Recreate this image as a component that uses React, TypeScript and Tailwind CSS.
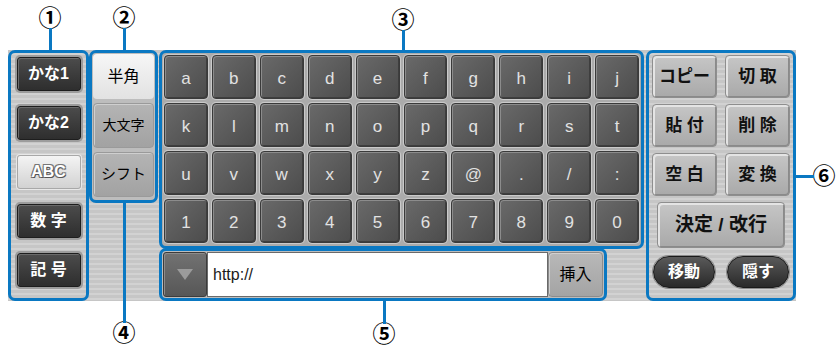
import React from 'react';

const rows: string[][] = [
  ['a', 'b', 'c', 'd', 'e', 'f', 'g', 'h', 'i', 'j'],
  ['k', 'l', 'm', 'n', 'o', 'p', 'q', 'r', 's', 't'],
  ['u', 'v', 'w', 'x', 'y', 'z', '@', '.', '/', ':'],
  ['1', '2', '3', '4', '5', '6', '7', '8', '9', '0'],
];

const leftKeys = [
  { label: 'かな1', active: false },
  { label: 'かな2', active: false },
  { label: 'ABC', active: true },
  { label: '数 字', active: false },
  { label: '記 号', active: false },
];

const editKeys = ['コピー', '切 取', '貼 付', '削 除', '空 白', '変 換'];

// circled number marker with its leader line
const Marker = ({ n, className }: { n: string; className: string }) => (
  <div
    className={`absolute flex h-[22px] w-[22px] items-center justify-center text-[23px] font-bold leading-none text-black ${className}`}
  >
    {n}
  </div>
);

const stripes =
  'bg-[repeating-linear-gradient(180deg,#c6c6c6_0px,#c6c6c6_3px,#d2d2d2_3px,#d2d2d2_5px)]';

export default function App() {
  return (
    <div className="relative h-[345px] w-[837px] overflow-hidden bg-white font-['Liberation_Sans','Noto_Sans_CJK_JP',sans-serif]">
      {/* callouts */}
      <Marker n="①" className="left-[39px] top-[7px]" />
      <div className="absolute left-[49px] top-[28px] h-[23px] w-[3px] bg-[#0a78c2]" />
      <Marker n="②" className="left-[113px] top-[7px]" />
      <div className="absolute left-[123px] top-[28px] h-[23px] w-[3px] bg-[#0a78c2]" />
      <Marker n="③" className="left-[392px] top-[9px]" />
      <div className="absolute left-[402px] top-[30px] h-[21px] w-[3px] bg-[#0a78c2]" />
      <Marker n="④" className="left-[113px] top-[322px]" />
      <div className="absolute left-[123px] top-[202px] z-10 h-[121px] w-[3px] bg-[#0a78c2]" />
      <Marker n="⑤" className="left-[373px] top-[323px]" />
      <div className="absolute left-[383px] top-[300px] h-[24px] w-[3px] bg-[#0a78c2]" />
      <Marker n="⑥" className="left-[813px] top-[165px]" />
      <div className="absolute left-[795px] top-[175px] h-[3px] w-[19px] bg-[#0a78c2]" />

      <div className="flex pl-[8px] pt-[50px]">
        <div className={`flex h-[251px] w-[788px] items-start ${stripes}`}>
          {/* group 1: input modes */}
          <div className="flex h-[251px] w-[81px] flex-col items-center gap-[15px] rounded-[7px] border-[3px] border-[#0a78c2] pt-[4px]">
            {leftKeys.map((k) => (
              <div
                key={k.label}
                className={
                  k.active
                    ? 'flex h-[34px] w-[64px] items-center justify-center rounded-[3px] border border-[#a8a8a8] bg-linear-to-b from-[#f4f4f4] to-[#d2d2d2] text-[16px] font-bold text-white shadow-[0_0_0_1px_#e8e8e8] [text-shadow:1px_1px_0_#555,-1px_-1px_0_#777,1px_-1px_0_#777,-1px_1px_0_#777]'
                    : 'flex h-[34px] w-[64px] items-center justify-center rounded-[3px] border border-[#1e1e1e] bg-linear-to-b from-[#4c4c4c] to-[#2e2e2e] text-[16px] font-bold text-white shadow-[0_0_0_2px_#9c9c9c,inset_1px_1px_0_#6a6a6a]'
                }
              >
                {k.label}
              </div>
            ))}
          </div>

          {/* group 2: width / case / shift */}
          <div className="flex h-[153px] w-[69px] flex-col gap-[4px] rounded-[7px] border-[3px] border-[#0a78c2] bg-[#bdbdbd] p-[1px]">
            <div className="flex h-[45px] items-center justify-center rounded-[4px] bg-linear-to-b from-[#f6f6f6] to-[#e2e2e2] text-[16px] text-black">
              半角
            </div>
            <div className="flex h-[45px] items-center justify-center rounded-[4px] border border-[#9a9a9a] bg-linear-to-b from-[#b4b4b4] to-[#a2a2a2] text-[14px] text-black shadow-[inset_1px_1px_0_#cfcfcf]">
              大文字
            </div>
            <div className="flex h-[45px] items-center justify-center rounded-[4px] border border-[#9a9a9a] bg-linear-to-b from-[#b4b4b4] to-[#a2a2a2] text-[15px] text-black shadow-[inset_1px_1px_0_#cfcfcf]">
              シフト
            </div>
          </div>

          {/* groups 3 and 5 */}
          <div className="ml-[1px] flex w-[485px] flex-col">
            <div className="h-[199px] w-[485px] rounded-[7px] border-[3px] border-[#0a78c2] bg-[#ababab] p-[2px]">
              <div className="grid grid-cols-10 gap-[4px]">
                {rows.flat().map((c, i) => (
                  <div
                    key={i}
                    className="flex h-[44px] items-center justify-center rounded-[4px] border border-[#3a3a3a] bg-linear-to-br from-[#6a6a6a] to-[#4c4c4c] pt-[4px] text-[17px] text-[#e2e2e2] shadow-[inset_1px_1px_0_#8c8c8c,inset_-1px_-1px_0_#3e3e3e,0_0_0_1px_#cacaca]"
                  >
                    {c}
                  </div>
                ))}
              </div>
            </div>
            <div className="-mt-[1px] flex h-[53px] w-[448px] items-stretch rounded-[7px] border-[3px] border-[#0a78c2] bg-[#bdbdbd] p-[1px]">
              <div className="flex w-[44px] items-center justify-center rounded-[3px] border border-[#3c3c3c] bg-linear-to-b from-[#727272] to-[#575757] shadow-[inset_1px_1px_0_#8c8c8c]">
                <svg width="16" height="11" viewBox="0 0 16 11">
                  <polygon points="0,0 16,0 8,11" fill="#9b9b9b" />
                </svg>
              </div>
              <div className="flex flex-1 items-center border border-[#6a6a6a] bg-white pl-[5px] text-[16px] text-[#1a1a1a]">
                http://
              </div>
              <div className="flex w-[55px] items-center justify-center rounded-[4px] border border-[#8c8c8c] bg-linear-to-b from-[#b8b8b8] to-[#a4a4a4] text-[16px] text-black shadow-[inset_1px_1px_0_#d0d0d0]">
                挿入
              </div>
            </div>
          </div>

          {/* group 6: editing */}
          <div className="ml-[2px] flex h-[251px] w-[150px] flex-col gap-[6px] rounded-[7px] border-[3px] border-[#0a78c2] px-[3px] pt-[2px]">
            <div className="grid grid-cols-2 gap-x-[8px] gap-y-[6px]">
              {editKeys.map((k) => (
                <div
                  key={k}
                  className="flex h-[43px] items-center justify-center rounded-[4px] border border-[#8e8e8e] bg-linear-to-b from-[#c6c6c6] to-[#a9a9a9] text-[17px] font-bold text-[#111] shadow-[inset_2px_2px_0_#e4e4e4,inset_-1px_-1px_0_#8a8a8a]"
                >
                  {k}
                </div>
              ))}
            </div>
            <div className="mx-[5px] flex h-[46px] items-center justify-center rounded-[4px] border border-[#8e8e8e] bg-linear-to-b from-[#c6c6c6] to-[#a9a9a9] text-[19px] font-bold text-[#111] shadow-[inset_2px_2px_0_#e4e4e4,inset_-1px_-1px_0_#8a8a8a]">
              決定 / 改行
            </div>
            <div className="mt-[2px] flex justify-between px-[1px]">
              <div className="flex h-[32px] w-[62px] items-center justify-center rounded-full border border-[#1a1a1a] bg-linear-to-b from-[#5a5a5a] to-[#2a2a2a] text-[16px] font-bold text-white shadow-[0_0_0_1px_#8a8a8a]">
                移動
              </div>
              <div className="flex h-[32px] w-[62px] items-center justify-center rounded-full border border-[#1a1a1a] bg-linear-to-b from-[#5a5a5a] to-[#2a2a2a] text-[16px] font-bold text-white shadow-[0_0_0_1px_#8a8a8a]">
                隠す
              </div>
            </div>
          </div>
        </div>
      </div>
    </div>
  );
}
